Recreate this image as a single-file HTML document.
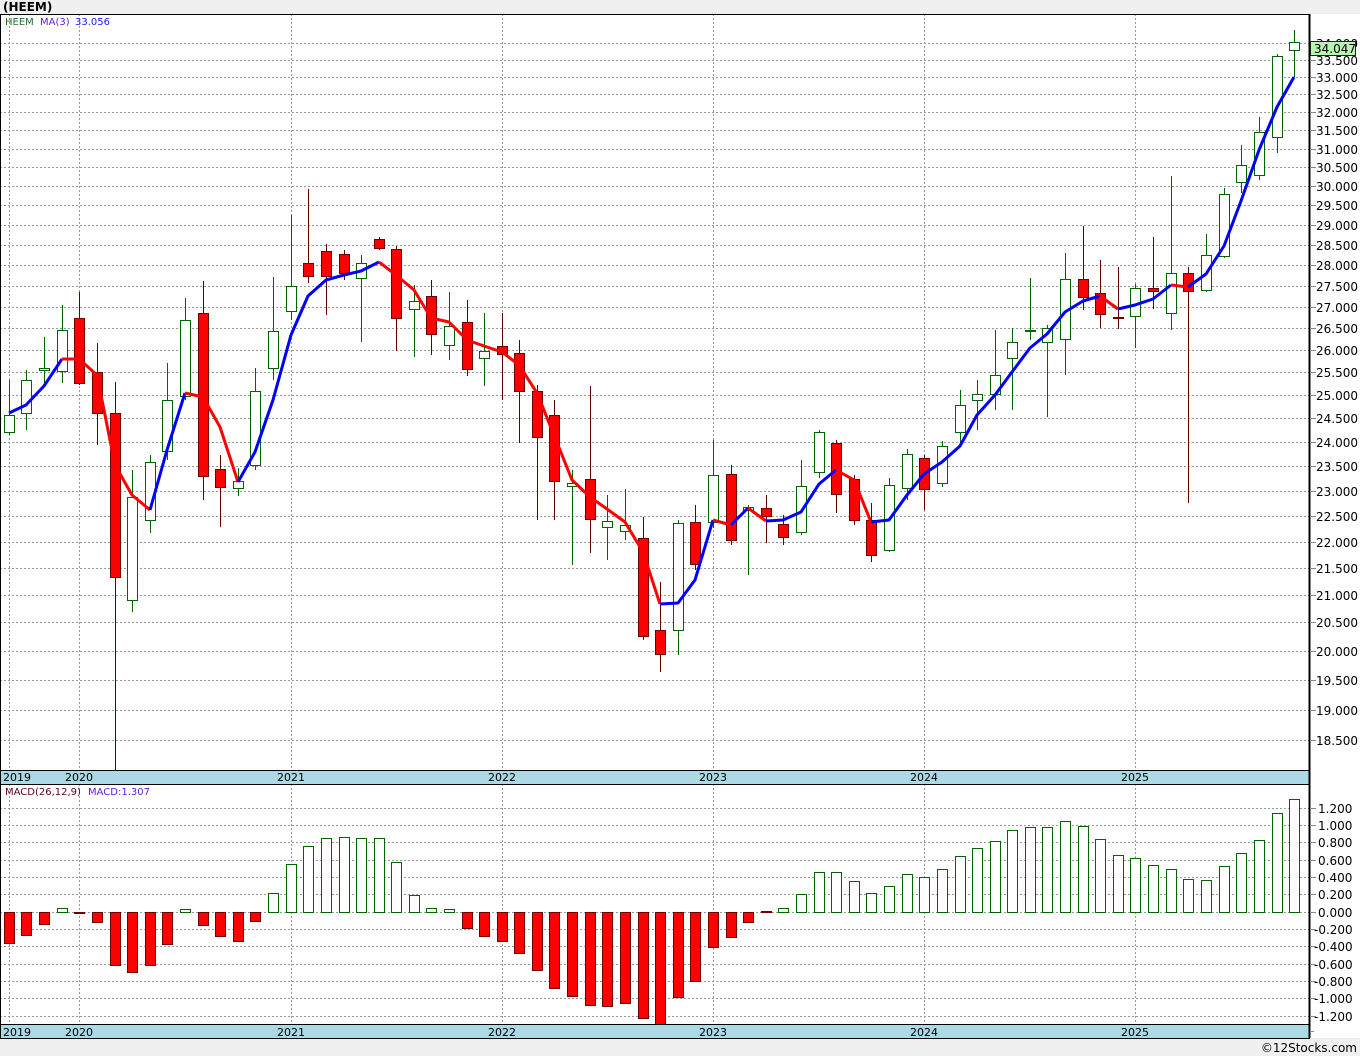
<!DOCTYPE html>
<html><head><meta charset="utf-8"><style>
html,body{margin:0;padding:0;background:#fff;}
body{width:1360px;height:1056px;overflow:hidden;position:relative;font-family:"DejaVu Sans","Liberation Sans",sans-serif;}
svg{position:absolute;left:0;top:0;}
.g line{stroke:#006400;stroke-width:1}
.g rect{fill:#fff;stroke:#006400;stroke-width:1}
.r line{stroke:#600000;stroke-width:1}
.r rect{fill:#ff0000;stroke:#700000;stroke-width:1}
.grid line{stroke:#999;stroke-width:1;stroke-dasharray:2,2}
.tk line{stroke:#888;stroke-width:1}
.lab text{font-size:12px;fill:#000;font-family:"DejaVu Sans",sans-serif}
</style></head><body>
<svg width="1360" height="1056" viewBox="0 0 1360 1056" shape-rendering="crispEdges">
<rect x="0" y="0" width="1360" height="14" fill="#f0f0f0"/>
<text x="3" y="11" font-size="12" font-weight="bold" font-family="DejaVu Sans,sans-serif" fill="#000">(HEEM)</text>
<rect x="0" y="1038" width="1360" height="18" fill="#f0f0f0"/>
<text x="1357" y="1052" font-size="12" text-anchor="end" font-family="DejaVu Sans,sans-serif" fill="#000">©12Stocks.com</text>

<!-- grids price -->
<g class="grid">
<line x1="0" x2="1309" y1="740.5" y2="740.5"/><line x1="0" x2="1309" y1="710.5" y2="710.5"/><line x1="0" x2="1309" y1="680.5" y2="680.5"/><line x1="0" x2="1309" y1="651.5" y2="651.5"/><line x1="0" x2="1309" y1="622.5" y2="622.5"/><line x1="0" x2="1309" y1="595.5" y2="595.5"/><line x1="0" x2="1309" y1="568.5" y2="568.5"/><line x1="0" x2="1309" y1="542.5" y2="542.5"/><line x1="0" x2="1309" y1="516.5" y2="516.5"/><line x1="0" x2="1309" y1="491.5" y2="491.5"/><line x1="0" x2="1309" y1="466.5" y2="466.5"/><line x1="0" x2="1309" y1="442.5" y2="442.5"/><line x1="0" x2="1309" y1="418.5" y2="418.5"/><line x1="0" x2="1309" y1="395.5" y2="395.5"/><line x1="0" x2="1309" y1="372.5" y2="372.5"/><line x1="0" x2="1309" y1="350.5" y2="350.5"/><line x1="0" x2="1309" y1="328.5" y2="328.5"/><line x1="0" x2="1309" y1="307.5" y2="307.5"/><line x1="0" x2="1309" y1="286.5" y2="286.5"/><line x1="0" x2="1309" y1="265.5" y2="265.5"/><line x1="0" x2="1309" y1="245.5" y2="245.5"/><line x1="0" x2="1309" y1="225.5" y2="225.5"/><line x1="0" x2="1309" y1="205.5" y2="205.5"/><line x1="0" x2="1309" y1="186.5" y2="186.5"/><line x1="0" x2="1309" y1="167.5" y2="167.5"/><line x1="0" x2="1309" y1="149.5" y2="149.5"/><line x1="0" x2="1309" y1="130.5" y2="130.5"/><line x1="0" x2="1309" y1="112.5" y2="112.5"/><line x1="0" x2="1309" y1="94.5" y2="94.5"/><line x1="0" x2="1309" y1="77.5" y2="77.5"/><line x1="0" x2="1309" y1="60.5" y2="60.5"/><line x1="0" x2="1309" y1="43.5" y2="43.5"/>
<line x1="9.5" x2="9.5" y1="14" y2="770"/><line x1="79.5" x2="79.5" y1="14" y2="770"/><line x1="291.5" x2="291.5" y1="14" y2="770"/><line x1="502.5" x2="502.5" y1="14" y2="770"/><line x1="713.5" x2="713.5" y1="14" y2="770"/><line x1="924.5" x2="924.5" y1="14" y2="770"/><line x1="1135.5" x2="1135.5" y1="14" y2="770"/>
<!-- macd grid -->
<line x1="0" x2="1309" y1="808.5" y2="808.5"/><line x1="0" x2="1309" y1="825.5" y2="825.5"/><line x1="0" x2="1309" y1="842.5" y2="842.5"/><line x1="0" x2="1309" y1="860.5" y2="860.5"/><line x1="0" x2="1309" y1="877.5" y2="877.5"/><line x1="0" x2="1309" y1="894.5" y2="894.5"/><line x1="0" x2="1309" y1="912.5" y2="912.5"/><line x1="0" x2="1309" y1="929.5" y2="929.5"/><line x1="0" x2="1309" y1="946.5" y2="946.5"/><line x1="0" x2="1309" y1="964.5" y2="964.5"/><line x1="0" x2="1309" y1="981.5" y2="981.5"/><line x1="0" x2="1309" y1="998.5" y2="998.5"/><line x1="0" x2="1309" y1="1016.5" y2="1016.5"/>
<line x1="9.5" x2="9.5" y1="784" y2="1024"/><line x1="79.5" x2="79.5" y1="784" y2="1024"/><line x1="291.5" x2="291.5" y1="784" y2="1024"/><line x1="502.5" x2="502.5" y1="784" y2="1024"/><line x1="713.5" x2="713.5" y1="784" y2="1024"/><line x1="924.5" x2="924.5" y1="784" y2="1024"/><line x1="1135.5" x2="1135.5" y1="784" y2="1024"/>
</g>

<!-- candles -->
<g class="g"><line x1="9.5" x2="9.5" y1="380" y2="435"/><rect x="4.5" y="415.5" width="10" height="17"/></g>
<g class="g"><line x1="26.5" x2="26.5" y1="370" y2="430"/><rect x="21.5" y="380.5" width="10" height="33"/></g>
<g class="g"><line x1="44.5" x2="44.5" y1="337" y2="383"/><rect x="39.5" y="368.5" width="10" height="2"/></g>
<g class="g"><line x1="62.5" x2="62.5" y1="305" y2="383"/><rect x="57.5" y="330.5" width="10" height="41"/></g>
<g class="r"><line x1="79.5" x2="79.5" y1="292" y2="385"/><rect x="74.5" y="318.5" width="10" height="65"/></g>
<g class="r"><line x1="97.5" x2="97.5" y1="343" y2="445"/><rect x="92.5" y="372.5" width="10" height="41"/></g>
<g class="r"><line x1="115.5" x2="115.5" y1="382" y2="770"/><rect x="110.5" y="413.5" width="10" height="164"/></g>
<g class="g"><line x1="132.5" x2="132.5" y1="470" y2="612"/><rect x="127.5" y="497.5" width="10" height="103"/></g>
<g class="g"><line x1="150.5" x2="150.5" y1="455" y2="533"/><rect x="145.5" y="462.5" width="10" height="58"/></g>
<g class="g"><line x1="167.5" x2="167.5" y1="363" y2="460"/><rect x="162.5" y="400.5" width="10" height="51"/></g>
<g class="g"><line x1="185.5" x2="185.5" y1="298" y2="400"/><rect x="180.5" y="320.5" width="10" height="76"/></g>
<g class="r"><line x1="203.5" x2="203.5" y1="281" y2="500"/><rect x="198.5" y="313.5" width="10" height="163"/></g>
<g class="r"><line x1="220.5" x2="220.5" y1="455" y2="527"/><rect x="215.5" y="469.5" width="10" height="18"/></g>
<g class="g"><line x1="238.5" x2="238.5" y1="468" y2="496"/><rect x="233.5" y="481.5" width="10" height="7"/></g>
<g class="g"><line x1="255.5" x2="255.5" y1="368" y2="470"/><rect x="250.5" y="391.5" width="10" height="74"/></g>
<g class="g"><line x1="273.5" x2="273.5" y1="277" y2="380"/><rect x="268.5" y="331.5" width="10" height="37"/></g>
<g class="g"><line x1="291.5" x2="291.5" y1="215" y2="320"/><rect x="286.5" y="286.5" width="10" height="25"/></g>
<g class="r"><line x1="308.5" x2="308.5" y1="189" y2="283"/><rect x="303.5" y="263.5" width="10" height="13"/></g>
<g class="r"><line x1="326.5" x2="326.5" y1="244" y2="315"/><rect x="321.5" y="251.5" width="10" height="25"/></g>
<g class="r"><line x1="344.5" x2="344.5" y1="250" y2="280"/><rect x="339.5" y="254.5" width="10" height="19"/></g>
<g class="g"><line x1="361.5" x2="361.5" y1="255" y2="342"/><rect x="356.5" y="263.5" width="10" height="15"/></g>
<g class="r"><line x1="379.5" x2="379.5" y1="237" y2="250"/><rect x="374.5" y="239.5" width="10" height="9"/></g>
<g class="r"><line x1="396.5" x2="396.5" y1="246" y2="351"/><rect x="391.5" y="249.5" width="10" height="69"/></g>
<g class="g"><line x1="414.5" x2="414.5" y1="285" y2="357"/><rect x="409.5" y="301.5" width="10" height="8"/></g>
<g class="r"><line x1="431.5" x2="431.5" y1="280" y2="355"/><rect x="426.5" y="296.5" width="10" height="38"/></g>
<g class="g"><line x1="449.5" x2="449.5" y1="292" y2="360"/><rect x="444.5" y="326.5" width="10" height="19"/></g>
<g class="r"><line x1="467.5" x2="467.5" y1="300" y2="376"/><rect x="462.5" y="322.5" width="10" height="47"/></g>
<g class="g"><line x1="484.5" x2="484.5" y1="313" y2="386"/><rect x="479.5" y="351.5" width="10" height="7"/></g>
<g class="r"><line x1="502.5" x2="502.5" y1="313" y2="400"/><rect x="497.5" y="346.5" width="10" height="8"/></g>
<g class="r"><line x1="519.5" x2="519.5" y1="340" y2="443"/><rect x="514.5" y="353.5" width="10" height="38"/></g>
<g class="r"><line x1="537.5" x2="537.5" y1="385" y2="520"/><rect x="532.5" y="391.5" width="10" height="46"/></g>
<g class="r"><line x1="554.5" x2="554.5" y1="400" y2="520"/><rect x="549.5" y="415.5" width="10" height="66"/></g>
<g class="g"><line x1="572.5" x2="572.5" y1="470" y2="565"/><rect x="567.5" y="483.5" width="10" height="3"/></g>
<g class="r"><line x1="590.5" x2="590.5" y1="386" y2="553"/><rect x="585.5" y="479.5" width="10" height="40"/></g>
<g class="g"><line x1="607.5" x2="607.5" y1="495" y2="560"/><rect x="602.5" y="521.5" width="10" height="6"/></g>
<g class="g"><line x1="625.5" x2="625.5" y1="489" y2="540"/><rect x="620.5" y="525.5" width="10" height="6"/></g>
<g class="r"><line x1="643.5" x2="643.5" y1="517" y2="640"/><rect x="638.5" y="538.5" width="10" height="98"/></g>
<g class="r"><line x1="660.5" x2="660.5" y1="582" y2="672"/><rect x="655.5" y="630.5" width="10" height="24"/></g>
<g class="g"><line x1="678.5" x2="678.5" y1="520" y2="655"/><rect x="673.5" y="523.5" width="10" height="107"/></g>
<g class="r"><line x1="695.5" x2="695.5" y1="505" y2="570"/><rect x="690.5" y="522.5" width="10" height="42"/></g>
<g class="g"><line x1="713.5" x2="713.5" y1="440" y2="528"/><rect x="708.5" y="475.5" width="10" height="47"/></g>
<g class="r"><line x1="731.5" x2="731.5" y1="465" y2="545"/><rect x="726.5" y="474.5" width="10" height="66"/></g>
<g class="g"><line x1="748.5" x2="748.5" y1="505" y2="575"/><rect x="743.5" y="507.5" width="10" height="3"/></g>
<g class="r"><line x1="766.5" x2="766.5" y1="495" y2="543"/><rect x="761.5" y="508.5" width="10" height="8"/></g>
<g class="r"><line x1="783.5" x2="783.5" y1="515" y2="545"/><rect x="778.5" y="524.5" width="10" height="13"/></g>
<g class="g"><line x1="801.5" x2="801.5" y1="460" y2="535"/><rect x="796.5" y="486.5" width="10" height="46"/></g>
<g class="g"><line x1="819.5" x2="819.5" y1="430" y2="478"/><rect x="814.5" y="432.5" width="10" height="40"/></g>
<g class="r"><line x1="836.5" x2="836.5" y1="440" y2="513"/><rect x="831.5" y="443.5" width="10" height="51"/></g>
<g class="r"><line x1="854.5" x2="854.5" y1="475" y2="525"/><rect x="849.5" y="479.5" width="10" height="41"/></g>
<g class="r"><line x1="871.5" x2="871.5" y1="503" y2="562"/><rect x="866.5" y="520.5" width="10" height="35"/></g>
<g class="g"><line x1="889.5" x2="889.5" y1="478" y2="552"/><rect x="884.5" y="485.5" width="10" height="65"/></g>
<g class="g"><line x1="907.5" x2="907.5" y1="449" y2="500"/><rect x="902.5" y="454.5" width="10" height="34"/></g>
<g class="r"><line x1="924.5" x2="924.5" y1="455" y2="510"/><rect x="919.5" y="458.5" width="10" height="31"/></g>
<g class="g"><line x1="942.5" x2="942.5" y1="441" y2="487"/><rect x="937.5" y="446.5" width="10" height="37"/></g>
<g class="g"><line x1="960.5" x2="960.5" y1="390" y2="445"/><rect x="955.5" y="405.5" width="10" height="27"/></g>
<g class="g"><line x1="977.5" x2="977.5" y1="380" y2="430"/><rect x="972.5" y="394.5" width="10" height="6"/></g>
<g class="g"><line x1="995.5" x2="995.5" y1="330" y2="410"/><rect x="990.5" y="375.5" width="10" height="19"/></g>
<g class="g"><line x1="1012.5" x2="1012.5" y1="328" y2="410"/><rect x="1007.5" y="342.5" width="10" height="16"/></g>
<g class="g"><line x1="1030.5" x2="1030.5" y1="278" y2="340"/><rect x="1025.5" y="330.5" width="10" height="1"/></g>
<g class="g"><line x1="1047.5" x2="1047.5" y1="325" y2="417"/><rect x="1042.5" y="328.5" width="10" height="14"/></g>
<g class="g"><line x1="1065.5" x2="1065.5" y1="253" y2="375"/><rect x="1060.5" y="279.5" width="10" height="60"/></g>
<g class="r"><line x1="1083.5" x2="1083.5" y1="226" y2="310"/><rect x="1078.5" y="279.5" width="10" height="18"/></g>
<g class="r"><line x1="1100.5" x2="1100.5" y1="260" y2="328"/><rect x="1095.5" y="293.5" width="10" height="21"/></g>
<g class="r"><line x1="1118.5" x2="1118.5" y1="267" y2="329"/><rect x="1113.5" y="317.5" width="10" height="1"/></g>
<g class="g"><line x1="1135.5" x2="1135.5" y1="284" y2="348"/><rect x="1130.5" y="288.5" width="10" height="28"/></g>
<g class="r"><line x1="1153.5" x2="1153.5" y1="237" y2="309"/><rect x="1148.5" y="288.5" width="10" height="3"/></g>
<g class="g"><line x1="1171.5" x2="1171.5" y1="176" y2="330"/><rect x="1166.5" y="273.5" width="10" height="40"/></g>
<g class="r"><line x1="1188.5" x2="1188.5" y1="267" y2="503"/><rect x="1183.5" y="273.5" width="10" height="18"/></g>
<g class="g"><line x1="1206.5" x2="1206.5" y1="234" y2="292"/><rect x="1201.5" y="255.5" width="10" height="35"/></g>
<g class="g"><line x1="1224.5" x2="1224.5" y1="188" y2="258"/><rect x="1219.5" y="194.5" width="10" height="62"/></g>
<g class="g"><line x1="1241.5" x2="1241.5" y1="145" y2="193"/><rect x="1236.5" y="165.5" width="10" height="17"/></g>
<g class="g"><line x1="1259.5" x2="1259.5" y1="117" y2="180"/><rect x="1254.5" y="132.5" width="10" height="43"/></g>
<g class="g"><line x1="1277.5" x2="1277.5" y1="54" y2="153"/><rect x="1272.5" y="56.5" width="10" height="81"/></g>
<g class="g"><line x1="1294.5" x2="1294.5" y1="30" y2="77"/><rect x="1289.5" y="42.5" width="10" height="8"/></g>

<!-- MA lines -->
<g fill="none" stroke-width="3" stroke-linejoin="round" shape-rendering="auto">
<polyline stroke="#0000ff" points="9,413 26,405 44,386 62,359"/>
<polyline stroke="#ff0000" points="62,359 79,359 97,375 115,465 132,495 150,510"/>
<polyline stroke="#0000ff" points="150,510 167,450 185,393"/>
<polyline stroke="#ff0000" points="185,393 203,397 220,427 238,482"/>
<polyline stroke="#0000ff" points="238,482 255,452 273,400 291,335 308,296 326,280 344,275 361,271 379,262"/>
<polyline stroke="#ff0000" points="379,262 396,275 414,290 431,318 449,322 467,340 484,346 502,352 519,365 537,393 554,435 572,480 590,497 607,509 625,522 643,552 660,604"/>
<polyline stroke="#0000ff" points="660,604 678,603 695,580 713,520"/>
<polyline stroke="#ff0000" points="713,520 731,525"/>
<polyline stroke="#0000ff" points="731,525 748,508"/>
<polyline stroke="#ff0000" points="748,508 766,521"/>
<polyline stroke="#0000ff" points="766,521 783,520 801,512 819,484 836,470"/>
<polyline stroke="#ff0000" points="836,470 854,480 871,522"/>
<polyline stroke="#0000ff" points="871,522 889,520 907,495 924,474 942,462 960,446 977,415 995,395 1012,372 1030,348 1047,334 1065,312 1083,301 1100,296"/>
<polyline stroke="#ff0000" points="1100,296 1118,309"/>
<polyline stroke="#0000ff" points="1118,309 1135,305 1153,299 1171,285"/>
<polyline stroke="#ff0000" points="1171,285 1188,287"/>
<polyline stroke="#0000ff" points="1188,287 1206,274 1224,246 1241,201 1259,150 1277,107 1294,77"/>
</g>

<!-- MACD bars -->
<g class="r"><rect x="4.5" y="912.5" width="10" height="31"/><rect x="21.5" y="912.5" width="10" height="23"/><rect x="39.5" y="912.5" width="10" height="12"/><rect x="74.5" y="912.5" width="10" height="1"/><rect x="92.5" y="912.5" width="10" height="10"/><rect x="110.5" y="912.5" width="10" height="53"/><rect x="127.5" y="912.5" width="10" height="60"/><rect x="145.5" y="912.5" width="10" height="53"/><rect x="162.5" y="912.5" width="10" height="32"/><rect x="198.5" y="912.5" width="10" height="13"/><rect x="215.5" y="912.5" width="10" height="24"/><rect x="233.5" y="912.5" width="10" height="29"/><rect x="250.5" y="912.5" width="10" height="9"/>
<rect x="462.5" y="912.5" width="10" height="16"/><rect x="479.5" y="912.5" width="10" height="24"/><rect x="497.5" y="912.5" width="10" height="29"/><rect x="514.5" y="912.5" width="10" height="41"/><rect x="532.5" y="912.5" width="10" height="58"/><rect x="549.5" y="912.5" width="10" height="76"/><rect x="567.5" y="912.5" width="10" height="84"/><rect x="585.5" y="912.5" width="10" height="93"/><rect x="602.5" y="912.5" width="10" height="94"/><rect x="620.5" y="912.5" width="10" height="91"/><rect x="638.5" y="912.5" width="10" height="106"/><rect x="655.5" y="912.5" width="10" height="113"/><rect x="673.5" y="912.5" width="10" height="85"/><rect x="690.5" y="912.5" width="10" height="69"/><rect x="708.5" y="912.5" width="10" height="35"/><rect x="726.5" y="912.5" width="10" height="25"/><rect x="743.5" y="912.5" width="10" height="10"/><rect x="761.5" y="911.5" width="10" height="1"/></g>
<g class="g"><rect x="57.5" y="908.5" width="10" height="4"/><rect x="180.5" y="909.5" width="10" height="3"/><rect x="268.5" y="893.5" width="10" height="19"/><rect x="286.5" y="864.5" width="10" height="48"/><rect x="303.5" y="846.5" width="10" height="66"/><rect x="321.5" y="838.5" width="10" height="74"/><rect x="339.5" y="837.5" width="10" height="75"/><rect x="356.5" y="838.5" width="10" height="74"/><rect x="374.5" y="838.5" width="10" height="74"/><rect x="391.5" y="862.5" width="10" height="50"/><rect x="409.5" y="895.5" width="10" height="17"/><rect x="426.5" y="908.5" width="10" height="4"/><rect x="444.5" y="909.5" width="10" height="3"/>
<rect x="778.5" y="908.5" width="10" height="4"/><rect x="796.5" y="894.5" width="10" height="18"/><rect x="814.5" y="872.5" width="10" height="40"/><rect x="831.5" y="872.5" width="10" height="40"/><rect x="849.5" y="881.5" width="10" height="31"/><rect x="866.5" y="893.5" width="10" height="19"/><rect x="884.5" y="886.5" width="10" height="26"/><rect x="902.5" y="874.5" width="10" height="38"/><rect x="919.5" y="877.5" width="10" height="35"/><rect x="937.5" y="869.5" width="10" height="43"/><rect x="955.5" y="856.5" width="10" height="56"/><rect x="972.5" y="848.5" width="10" height="64"/><rect x="990.5" y="841.5" width="10" height="71"/><rect x="1007.5" y="830.5" width="10" height="82"/><rect x="1025.5" y="827.5" width="10" height="85"/><rect x="1042.5" y="827.5" width="10" height="85"/><rect x="1060.5" y="821.5" width="10" height="91"/><rect x="1078.5" y="826.5" width="10" height="86"/><rect x="1095.5" y="839.5" width="10" height="73"/><rect x="1113.5" y="855.5" width="10" height="57"/><rect x="1130.5" y="858.5" width="10" height="54"/><rect x="1148.5" y="865.5" width="10" height="47"/><rect x="1166.5" y="869.5" width="10" height="43"/><rect x="1183.5" y="879.5" width="10" height="33"/><rect x="1201.5" y="880.5" width="10" height="32"/><rect x="1219.5" y="866.5" width="10" height="46"/><rect x="1236.5" y="853.5" width="10" height="59"/><rect x="1254.5" y="840.5" width="10" height="72"/><rect x="1272.5" y="813.5" width="10" height="99"/><rect x="1289.5" y="799.5" width="10" height="113"/></g>

<!-- date bars -->
<rect x="0" y="770" width="1309" height="14" fill="#add8e6"/>
<rect x="0" y="1025" width="1309" height="13" fill="#add8e6"/>
<g font-size="11" font-family="DejaVu Sans,sans-serif" fill="#000">
<text x="3" y="781">2019</text><text x="65" y="781">2020</text><text x="277" y="781">2021</text><text x="488" y="781">2022</text><text x="699" y="781">2023</text><text x="910" y="781">2024</text><text x="1121" y="781">2025</text>
<text x="3" y="1036">2019</text><text x="65" y="1036">2020</text><text x="277" y="1036">2021</text><text x="488" y="1036">2022</text><text x="699" y="1036">2023</text><text x="910" y="1036">2024</text><text x="1121" y="1036">2025</text>
</g>

<!-- frames -->
<g fill="none" stroke="#000">
<line x1="0" x2="1310" y1="14.5" y2="14.5"/>
<line x1="0" x2="1310" y1="770.5" y2="770.5"/>
<line x1="0" x2="1310" y1="784.5" y2="784.5"/>
<line x1="0" x2="1310" y1="1024.5" y2="1024.5"/>
<line x1="0" x2="1310" y1="1038.5" y2="1038.5"/>
<line x1="0.5" x2="0.5" y1="14" y2="1038"/>
<line x1="1309.5" x2="1309.5" y1="14" y2="1038" stroke-width="2"/>
</g>

<!-- axis ticks -->
<g class="tk">
<line x1="1310" x2="1316" y1="740.5" y2="740.5"/><line x1="1310" x2="1316" y1="710.5" y2="710.5"/><line x1="1310" x2="1316" y1="680.5" y2="680.5"/><line x1="1310" x2="1316" y1="651.5" y2="651.5"/><line x1="1310" x2="1316" y1="622.5" y2="622.5"/><line x1="1310" x2="1316" y1="595.5" y2="595.5"/><line x1="1310" x2="1316" y1="568.5" y2="568.5"/><line x1="1310" x2="1316" y1="542.5" y2="542.5"/><line x1="1310" x2="1316" y1="516.5" y2="516.5"/><line x1="1310" x2="1316" y1="491.5" y2="491.5"/><line x1="1310" x2="1316" y1="466.5" y2="466.5"/><line x1="1310" x2="1316" y1="442.5" y2="442.5"/><line x1="1310" x2="1316" y1="418.5" y2="418.5"/><line x1="1310" x2="1316" y1="395.5" y2="395.5"/><line x1="1310" x2="1316" y1="372.5" y2="372.5"/><line x1="1310" x2="1316" y1="350.5" y2="350.5"/><line x1="1310" x2="1316" y1="328.5" y2="328.5"/><line x1="1310" x2="1316" y1="307.5" y2="307.5"/><line x1="1310" x2="1316" y1="286.5" y2="286.5"/><line x1="1310" x2="1316" y1="265.5" y2="265.5"/><line x1="1310" x2="1316" y1="245.5" y2="245.5"/><line x1="1310" x2="1316" y1="225.5" y2="225.5"/><line x1="1310" x2="1316" y1="205.5" y2="205.5"/><line x1="1310" x2="1316" y1="186.5" y2="186.5"/><line x1="1310" x2="1316" y1="167.5" y2="167.5"/><line x1="1310" x2="1316" y1="149.5" y2="149.5"/><line x1="1310" x2="1316" y1="130.5" y2="130.5"/><line x1="1310" x2="1316" y1="112.5" y2="112.5"/><line x1="1310" x2="1316" y1="94.5" y2="94.5"/><line x1="1310" x2="1316" y1="77.5" y2="77.5"/><line x1="1310" x2="1316" y1="60.5" y2="60.5"/><line x1="1310" x2="1316" y1="43.5" y2="43.5"/>
<line x1="1310" x2="1316" y1="808.5" y2="808.5"/><line x1="1310" x2="1316" y1="825.5" y2="825.5"/><line x1="1310" x2="1316" y1="842.5" y2="842.5"/><line x1="1310" x2="1316" y1="860.5" y2="860.5"/><line x1="1310" x2="1316" y1="877.5" y2="877.5"/><line x1="1310" x2="1316" y1="894.5" y2="894.5"/><line x1="1310" x2="1316" y1="912.5" y2="912.5"/><line x1="1310" x2="1316" y1="929.5" y2="929.5"/><line x1="1310" x2="1316" y1="946.5" y2="946.5"/><line x1="1310" x2="1316" y1="964.5" y2="964.5"/><line x1="1310" x2="1316" y1="981.5" y2="981.5"/><line x1="1310" x2="1316" y1="998.5" y2="998.5"/><line x1="1310" x2="1316" y1="1016.5" y2="1016.5"/><line x1="1310" x2="1314" y1="1031.5" y2="1031.5"/>
</g>

<g class="lab">
<text x="1316" y="745">18.500</text><text x="1316" y="715">19.000</text><text x="1316" y="685">19.500</text><text x="1316" y="656">20.000</text><text x="1316" y="627">20.500</text><text x="1316" y="600">21.000</text><text x="1316" y="573">21.500</text><text x="1316" y="547">22.000</text><text x="1316" y="521">22.500</text><text x="1316" y="496">23.000</text><text x="1316" y="471">23.500</text><text x="1316" y="447">24.000</text><text x="1316" y="423">24.500</text><text x="1316" y="400">25.000</text><text x="1316" y="377">25.500</text><text x="1316" y="355">26.000</text><text x="1316" y="333">26.500</text><text x="1316" y="312">27.000</text><text x="1316" y="291">27.500</text><text x="1316" y="270">28.000</text><text x="1316" y="250">28.500</text><text x="1316" y="230">29.000</text><text x="1316" y="210">29.500</text><text x="1316" y="191">30.000</text><text x="1316" y="172">30.500</text><text x="1316" y="154">31.000</text><text x="1316" y="135">31.500</text><text x="1316" y="117">32.000</text><text x="1316" y="99">32.500</text><text x="1316" y="82">33.000</text><text x="1316" y="65">33.500</text><text x="1316" y="48">34.000</text>
<text x="1318" y="813">1.200</text><text x="1318" y="830">1.000</text><text x="1318" y="847">0.800</text><text x="1318" y="865">0.600</text><text x="1318" y="882">0.400</text><text x="1318" y="899">0.200</text><text x="1318" y="917">0.000</text><text x="1314" y="934">-0.200</text><text x="1314" y="951">-0.400</text><text x="1314" y="969">-0.600</text><text x="1314" y="986">-0.800</text><text x="1314" y="1003">-1.000</text><text x="1314" y="1021">-1.200</text>
</g>
<rect x="1310.5" y="41.5" width="45" height="14" fill="#b8f5b0" stroke="#222"/>
<text x="1314" y="53" font-size="12" font-family="DejaVu Sans,sans-serif" fill="#000">34.047</text>

<!-- legends -->
<g font-size="10" font-family="DejaVu Sans,sans-serif">
<text x="5" y="25" fill="#2a6a2a">HEEM</text><text x="40" y="25" fill="#6020e0">MA(3)</text><text x="75" y="25" fill="#2020ff">33.056</text>
<text x="5" y="795" fill="#600020">MACD(26,12,9)</text><text x="88" y="795" fill="#6020e0">MACD:1.307</text>
</g>
</svg>
</body></html>
